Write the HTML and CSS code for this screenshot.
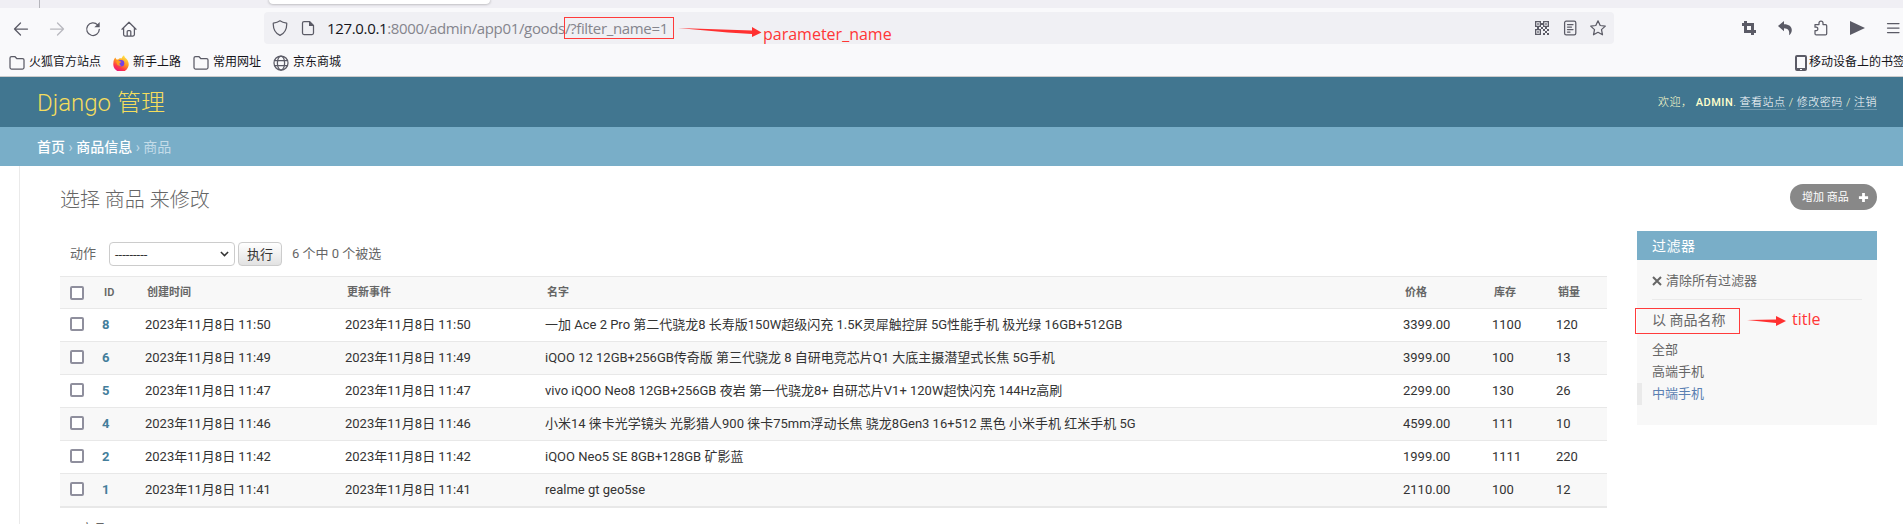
FILE: index.html
```html
<!DOCTYPE html>
<html lang="zh-CN">
<head>
<meta charset="utf-8">
<title>选择 商品 来修改 | Django 管理</title>
<link rel="stylesheet" href="styles.css">
</head>
<body>
<div class="tabstrip"><span class="tab-sep"></span><span class="tab"></span></div>
<div class="toolbar">
  <div class="nav">
    <svg class="ic" viewBox="0 0 16 16"><path d="M14.500 8H1.500M7.500 2L1.500 8l6 6"/></svg>
    <svg class="ic dim" viewBox="0 0 16 16"><path d="M1.500 8h13M8.500 2l6 6-6 6"/></svg>
    <svg class="ic" viewBox="0 0 16 16"><path d="M14.3 8.3A6.3 6.3 0 1 1 12.6 3.9"/><path class="fill" d="M14.7 1v5.3H9.4z"/></svg>
    <svg class="ic" viewBox="0 0 16 16"><path d="M1 8.3L8 1.2l7 7.1M2.6 7v6.6q0 1.4 1.4 1.4h8q1.4 0 1.4-1.4V7M6.2 15V10.600q0-1 1-1h1.600q1 0 1 1V15"/></svg>
  </div>
  <div class="urlbar">
    <svg class="ic shield" viewBox="0 0 16 16"><path d="M8 .8Q10.500 2.700 14.700 3.100C15 8.600 13 13 8 15.400 3 13 1 8.600 1.300 3.100Q5.500 2.700 8 .8z"/></svg>
    <svg class="ic page" viewBox="0 0 16 16"><path d="M4 1.500h5.500l4 4V13q0 1.500-1.500 1.500H4Q2.500 14.500 2.500 13V3Q2.500 1.500 4 1.500z"/><path class="fill" d="M9 1v5h5z"/></svg>
    <span class="url"><b>127.0.0.1</b>:8000/admin/app01/goods/<span>?filter_name=1</span></span>
    <div class="url-actions">
      <svg class="ic" viewBox="0 0 16 16"><path class="fill" fill-rule="evenodd" d="M1 1h6v6H1zM2.300 2.300v3.400h3.400V2.300zM3.200 3.200h1.600v1.600H3.200zM9 1h6v6H9zM10.300 2.300v3.400h3.400V2.300zM11.200 3.200h1.600v1.600h-1.600zM1 9h6v6H1zM2.300 10.300v3.400h3.400v-3.400zM3.200 11.200h1.600v1.600H3.200zM7 3h2v2H7zM3 7h2v2H3zM9 9h2v2H9zM13 9h2v2h-2zM11 11h2v2h-2zM9 13h2v2H9zM13 13h2v2h-2zM7 7h2v2H7zM11 7h2v2h-2z"/></svg>
      <svg class="ic" viewBox="0 0 16 16"><rect x="2.600" y="1.200" width="11.200" height="13.600" rx="1.600"/><path d="M5.500 4.500h5.500M5.500 7h4M5.500 9.500h5.500M5.500 12h2.500"/></svg>
      <svg class="ic star" viewBox="0 0 16 16"><path d="M8 .8l2.200 4.700 5.100.6-3.800 3.500 1 5.200L8 12.300l-4.500 2.500 1-5.200L.7 6.100l5.100-.6z"/></svg>
    </div>
  </div>
  <div class="tools">
    <svg class="ic" viewBox="0 0 16 16"><path class="fill" fill-rule="evenodd" d="M3 1h3v2h7v7h2v3h-2v2h-3v-2H3V6H1V3h2zM6 6v4h4V6z"/></svg>
    <svg class="ic" viewBox="0 0 16 16"><path class="fill" d="M1 6l6-5v3.200C12 4.200 14.800 6.500 14.800 10c0 2-1 4-2.800 5.200C13 10.500 11 8.500 7 8.200V11.300z"/></svg>
    <svg class="ic" viewBox="0 0 16 16"><path d="M2 4.500h4V3a2 2 0 0 1 4 0v1.500h2.500q1.200 0 1.200 1.200v8q0 1.200-1.200 1.200H3.200Q2 14.900 2 13.700v-3h1.500a1.800 1.800 0 0 0 0-3.500H2z"/></svg>
    <svg class="ic" viewBox="0 0 16 16"><path class="fill" d="M1 1l15 7-15 7z"/></svg>
    <svg class="ic menu" viewBox="0 0 16 16"><path d="M2.500 3.500h11.500M2.500 8h11.500M2.500 12.500h11.500"/></svg>
  </div>
</div>
<div class="bookmarks">
  <span class="bm"><svg class="ic" viewBox="0 0 16 16"><path d="M1 3q0-1.500 1.500-1.500h3.300L7.700 3.500h5.800Q15 3.500 15 5v7.500Q15 14 13.500 14h-11Q1 14 1 12.500z"/></svg>火狐官方站点</span>
  <span class="bm"><svg class="fox" viewBox="0 0 16 16"><defs><linearGradient id="flame" x1=".8" y1="0" x2=".3" y2="1"><stop offset="0" stop-color="#fff04f"/><stop offset=".45" stop-color="#ff9a1f"/><stop offset=".75" stop-color="#ff3647"/><stop offset="1" stop-color="#e31587"/></linearGradient></defs><path fill="url(#flame)" d="M11 .2c.3 1.600 1.200 2.300 2.400 3.600A7.700 7.700 0 1 1 .4 8C.4 5.800 1 4 2.300 2.600L3.500 4.600 5.200 4.400C6.200 3 7.500 3.200 8.500 3.600 9 2.500 9.600 1 11 .2z"/><circle cx="8" cy="8.300" r="3.300" fill="#7542e5"/><path fill="#ff9a1f" d="M3 6.500C5 5 7 6.200 8.500 7L6.500 8.300Q6 9.800 8 10.200 6 11.500 4.500 10z"/></svg>新手上路</span>
  <span class="bm"><svg class="ic" viewBox="0 0 16 16"><path d="M1 3q0-1.500 1.500-1.500h3.300L7.700 3.500h5.800Q15 3.500 15 5v7.500Q15 14 13.500 14h-11Q1 14 1 12.500z"/></svg>常用网址</span>
  <span class="bm"><svg class="ic" viewBox="0 0 16 16"><circle cx="8" cy="8" r="7"/><ellipse cx="8" cy="8" rx="3.600" ry="7"/><path d="M1.500 5.500h13M1.500 10.500h13"/></svg>京东商城</span>
  <span class="bm mobile"><svg class="ic" viewBox="0 0 16 16"><path class="fill" fill-rule="evenodd" d="M4 0h8q2 0 2 2v12q0 2-2 2H4q-2 0-2-2V2q0-2 2-2zM4 2v11h8V2zM7 14v1h2v-1z"/></svg>移动设备上的书签</span>
</div>
<header class="header">
  <div class="brand">Django 管理</div>
  <div class="user">欢迎， <strong>ADMIN</strong>. <a>查看站点</a> / <a>修改密码</a> / <a>注销</a></div>
</header>
<nav class="crumbs"><a>首页</a> › <a>商品信息</a> › 商品</nav>
<div class="main">
  <div class="content">
    <div class="heading"><h1>选择 商品 来修改</h1><a class="add">增加 商品<svg viewBox="0 0 12 12"><path d="M6 1v10M1 6h10"/></svg></a></div>
    <div class="columns">
      <div class="list">
        <div class="actions"><label>动作</label><span class="select">---------<svg viewBox="0 0 10 6"><path d="M1 .8l4 4 4-4"/></svg></span><button>执行</button><span class="count">6 个中 0 个被选</span></div>
        <table>
          <colgroup><col class="c0"><col class="c1"><col class="c2"><col class="c2"><col class="c4"><col class="c5"><col class="c6"><col class="c7"></colgroup>
          <thead><tr><th><i></i></th><th class="up">ID</th><th>创建时间</th><th>更新事件</th><th>名字</th><th>价格</th><th>库存</th><th>销量</th></tr></thead>
          <tbody>
            <tr><td><i></i></td><td class="id">8</td><td>2023年11月8日 11:50</td><td>2023年11月8日 11:50</td><td>一加 Ace 2 Pro 第二代骁龙8 长寿版150W超级闪充 1.5K灵犀触控屏 5G性能手机 极光绿 16GB+512GB</td><td>3399.00</td><td>1100</td><td>120</td></tr>
            <tr><td><i></i></td><td class="id">6</td><td>2023年11月8日 11:49</td><td>2023年11月8日 11:49</td><td>iQOO 12 12GB+256GB传奇版 第三代骁龙 8 自研电竞芯片Q1 大底主摄潜望式长焦 5G手机</td><td>3999.00</td><td>100</td><td>13</td></tr>
            <tr><td><i></i></td><td class="id">5</td><td>2023年11月8日 11:47</td><td>2023年11月8日 11:47</td><td>vivo iQOO Neo8 12GB+256GB 夜岩 第一代骁龙8+ 自研芯片V1+ 120W超快闪充 144Hz高刷</td><td>2299.00</td><td>130</td><td>26</td></tr>
            <tr><td><i></i></td><td class="id">4</td><td>2023年11月8日 11:46</td><td>2023年11月8日 11:46</td><td>小米14 徕卡光学镜头 光影猎人900 徕卡75mm浮动长焦 骁龙8Gen3 16+512 黑色 小米手机 红米手机 5G</td><td>4599.00</td><td>111</td><td>10</td></tr>
            <tr><td><i></i></td><td class="id">2</td><td>2023年11月8日 11:42</td><td>2023年11月8日 11:42</td><td>iQOO Neo5 SE 8GB+128GB 矿影蓝</td><td>1999.00</td><td>1111</td><td>220</td></tr>
            <tr><td><i></i></td><td class="id">1</td><td>2023年11月8日 11:41</td><td>2023年11月8日 11:41</td><td>realme gt geo5se</td><td>2110.00</td><td>100</td><td>12</td></tr>
          </tbody>
        </table>
        <p class="pager">6 商品</p>
      </div>
      <aside class="filter">
        <h2>过滤器</h2>
        <div class="clear"><svg viewBox="0 0 10 10"><path d="M1 1l8 8M9 1L1 9"/></svg>清除所有过滤器</div>
        <h3>以 商品名称</h3>
        <ul><li>全部</li><li>高端手机</li><li class="selected">中端手机</li></ul>
      </aside>
    </div>
  </div>
</div>
<div class="mark mark-url"></div>
<svg class="arrow arrow-url" viewBox="0 0 84 12"><path d="M0 2L74 4.500V1l9.500 5.500-9.500 4.500V8L50 6.500z"/></svg>
<span class="note note-url">parameter_name</span>
<div class="mark mark-title"></div>
<svg class="arrow arrow-title" viewBox="0 0 40 12"><path d="M0 5L29 4.500V1l10 5-10 5V8z"/></svg>
<span class="note note-title">title</span>
</body>
</html>
```
FILE: styles.css
```css
* { box-sizing: border-box; }
html, body { height: 524px; overflow: hidden; }
body {
  margin: 0;
  position: relative;
  background: #fff;
  color: #333;
  font: 13px/17px Roboto, "Noto Sans CJK SC", sans-serif;
}
svg { display: block; flex: none; }

/* Browser chrome */
.tabstrip { height: 8px; background: #f0eff4; display: flex; overflow: hidden; }
.tab-sep { width: 1px; height: 8px; margin-left: 39px; background: #b5b5bb; }
.tab { width: 221px; height: 4px; margin-left: 229px; background: #fff; border-radius: 0 0 4px 4px; box-shadow: 0 0 3px rgba(0,0,0,.4); }
.toolbar { height: 41px; background: #f9f9fb; display: flex; padding: 4px 0 0 13px; }
.ic { width: 16px; height: 16px; fill: none; stroke: #5b5b66; stroke-width: 1.25; stroke-linecap: round; stroke-linejoin: round; }
.ic .fill { fill: #5b5b66; stroke: none; }
.dim { opacity: .4; }
.nav { flex: none; width: 251px; display: flex; gap: 20px; padding-top: 9px; }
.urlbar { flex: none; width: 1350px; height: 32px; padding: 0 8px; border-radius: 4px; background: #f0f0f4; display: flex; align-items: center; }
.page { margin-left: 12px; }
.url { margin-left: 11px; color: #85858d; font: 15px/30px "Open Sans", sans-serif; letter-spacing: -.34px; white-space: nowrap; }
.url b { color: #15141a; font-weight: 400; }
.url-actions { margin-left: auto; display: flex; gap: 12px; }
.tools { flex: none; margin-left: 127px; display: flex; gap: 20px; padding-top: 8px; }
.bookmarks { height: 28px; border-bottom: 1px solid #ccc; background: #f9f9fb; display: flex; gap: 12px; padding: 0 0 0 9px; align-items: center; color: #15141a; font-size: 12px; overflow: hidden; }
.bm { display: flex; align-items: center; gap: 4px; white-space: nowrap; }
.fox { width: 16px; height: 16px; }
.mobile { margin: 0 -2px 0 auto; gap: 0; }

/* Admin header */
.header { height: 50px; background: #417690; padding: 0 26px 0 37px; display: flex; justify-content: space-between; align-items: center; }
.brand { padding-top: 2px; color: #f5dd5d; font-size: 24px; font-weight: 300; line-height: 30px; }
.user { color: #ffc; font-size: 11px; font-weight: 300; letter-spacing: .5px; }
.user strong { font-weight: 500; }
.user a { color: #fff; border-bottom: 1px solid rgba(255,255,255,.25); }
.crumbs { height: 39px; line-height: 40px; background: #79aec8; color: #c4dce8; padding-left: 37px; font-size: 14px; }
.crumbs a { color: #fff; font-weight: 500; }

/* Change list */
.main { margin-left: 19px; height: 358px; border-left: 1px solid #eaeaea; overflow: hidden; }
.content { padding: 18px 26px 0 40px; }
.heading { display: flex; justify-content: space-between; height: 47px; }
h1 { margin: 0; color: #666; font-size: 20px; font-weight: 300; line-height: 32px; }
.add { width: 87px; height: 26px; padding: 0 8px 0 12px; border-radius: 13px; background: #888; color: #fff; font-size: 11px; display: flex; align-items: center; justify-content: space-between; white-space: nowrap; }
.add svg { width: 11px; height: 11px; stroke: #fff; stroke-width: 3; }
.columns { display: flex; gap: 30px; align-items: flex-start; }
.list { width: 1547px; }
.actions { height: 45px; padding: 11px 10px 0; display: flex; color: #666; line-height: 23px; }
.select { width: 126px; height: 24px; margin-left: 13px; padding: 0 5px; border: 1px solid #ccc; border-radius: 4px; background: #fff; color: #333; display: flex; justify-content: space-between; align-items: center; }
.select svg { width: 9px; height: 6px; fill: none; stroke: #333; stroke-width: 1.700; }
button { width: 44px; height: 24px; margin: 0 10px 0 3px; padding: 0; border: 1px solid #ccc; border-radius: 4px; background: linear-gradient(#fff, #e2e2e2); color: #333; font: inherit; line-height: 21px; }
table { width: 1547px; table-layout: fixed; border-collapse: separate; border-spacing: 0; border-top: 1px solid #e8e8e8; border-bottom: 1px solid #e8e8e8; }
.c0 { width: 34px; } .c1 { width: 43px; } .c2 { width: 200px; } .c4 { width: 858px; } .c5 { width: 89px; } .c6 { width: 64px; } .c7 { width: 59px; }
th, td { padding: 0 8px; text-align: left; border-bottom: 1px solid #e8e8e8; white-space: nowrap; }
th { height: 32px; padding-left: 10px; background: #f8f8f8; color: #666; font-size: 11px; font-weight: 600; }
td { height: 33px; padding-bottom: 2px; }
td:first-child { padding-left: 10px; }
tbody tr:nth-child(even) { background: #f8f8f8; }
.id { color: #447e9b; font-weight: 700; }
i { display: block; width: 14px; height: 14px; border: 2px solid #8f8f9d; border-radius: 2px; background: #fff; }
.pager { margin: 0; padding: 12px 10px 0; color: #666; }

/* Filter panel */
.filter { width: 240px; height: 194px; background: #f8f8f8; color: #666; }
h2 { margin: 0; height: 29px; padding: 0 15px; background: #79aec8; color: #fff; font-size: 14px; font-weight: 400; line-height: 30px; letter-spacing: .5px; }
.clear { height: 40px; margin: 0 15px; padding-top: 2px; border-bottom: 1px solid #eaeaea; display: flex; align-items: center; gap: 4px; }
.clear svg { width: 10px; height: 10px; stroke: #666; stroke-width: 2; }
h3 { margin: 0; padding: 9px 15px 8px; font-size: 14px; font-weight: 400; line-height: 22px; }
ul { list-style: none; margin: 0; padding: 0; }
li { height: 22px; padding-left: 15px; line-height: 22px; }
.selected { padding-left: 10px; border-left: 5px solid #eaeaea; color: #5b80b2; }

/* Annotations */
.mark, .arrow, .note { position: absolute; }
.mark { border: 1px solid #ff3b3b; }
.mark-url { left: 564px; top: 17px; width: 110px; height: 22px; }
.mark-title { left: 1635px; top: 308px; width: 105px; height: 26px; }
.arrow { fill: #ff3030; }
.arrow-url { left: 678px; top: 26px; width: 84px; height: 12px; }
.arrow-title { left: 1747px; top: 315px; width: 40px; height: 12px; }
.note { color: #ff3636; font: 16px/24px "Open Sans", sans-serif; }
.note-url { left: 763px; top: 22px; }
.note-title { left: 1792px; top: 307px; }
```
